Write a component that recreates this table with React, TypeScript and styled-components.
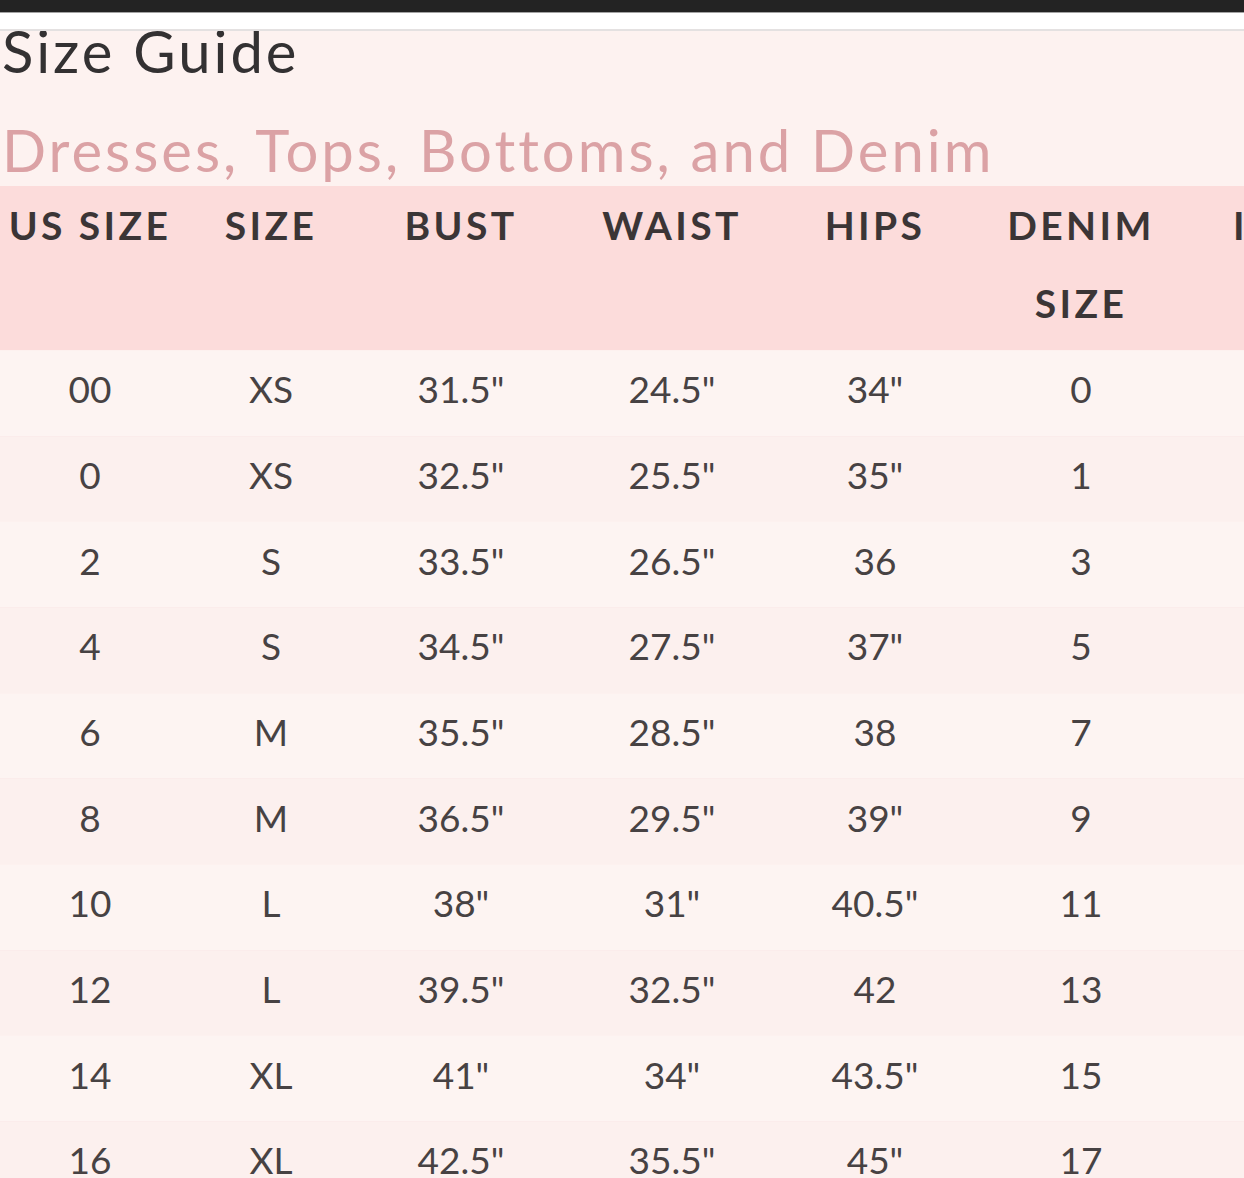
import React from "react";
import styled, { createGlobalStyle } from "styled-components";

const GlobalStyle = createGlobalStyle`
  html, body {
    margin: 0;
    padding: 0;
    background: #fdf2f0;
    overflow: hidden;
  }
  body {
    font-family: Lato, "Open Sans", "Liberation Sans", sans-serif;
  }
`;

const Screen = styled.div`
  width: 1244px;
  height: 1178px;
  overflow: hidden;
  background: #fdf2f0;
  display: flex;
  flex-direction: column;
`;

const TopBar = styled.div`
  flex: none;
  height: 12px;
  background: #232323;
  border-bottom: 1px solid #a3a3a3;
`;

const WhiteStrip = styled.div`
  flex: none;
  height: 16px;
  background: #ffffff;
  border-bottom: 2px solid #e4e1e1;
`;

const TitleClip = styled.div`
  flex: none;
  height: 54px;
  overflow: hidden;
`;

const Title = styled.h1`
  margin: -15px 0 0 2px;
  font-family: Lato, "Open Sans", sans-serif;
  font-weight: 400;
  font-size: 58px;
  line-height: 70px;
  color: #333132;
  letter-spacing: 3px;
  white-space: nowrap;
`;

const Subtitle = styled.h2`
  flex: none;
  margin: 0;
  padding: 36px 0 0 2px;
  height: 101px;
  box-sizing: border-box;
  font-family: Lato, "Open Sans", sans-serif;
  font-weight: 400;
  font-size: 58px;
  line-height: 58px;
  letter-spacing: 3px;
  color: #dba2a5;
  white-space: nowrap;
`;

const Table = styled.div`
  display: grid;
  grid-template-columns: 180px 182px 198px 224px 182px 230px 244px;
  width: max-content;
`;

const HeaderCell = styled.div`
  background: #fcdcdb;
  height: 164px;
  box-sizing: border-box;
  display: flex;
  flex-direction: column;
  align-items: center;
`;

const HeadLine = styled.span`
  font-family: Lato, "Open Sans", sans-serif;
  font-weight: 700;
  font-size: 39px;
  line-height: 78px;
  letter-spacing: 3.4px;
  color: #3b3536;
  white-space: nowrap;
`;

const Cell = styled.div<{ $alt: boolean }>`
  height: 85.67px;
  box-sizing: border-box;
  padding-bottom: 9px;
  display: flex;
  align-items: center;
  justify-content: center;
  background: ${(p) => (p.$alt ? "#fcf0ee" : "#fdf4f2")};
  border-top: 1px solid ${(p) => (p.$alt ? "#fbeceb" : "#fdf1ef")};
  font-family: Lato, "Open Sans", sans-serif;
  font-weight: 400;
  font-size: 37px;
  line-height: 1;
  color: #474243;
  white-space: nowrap;
`;

const headers: string[][] = [
  ["US SIZE"],
  ["SIZE"],
  ["BUST"],
  ["WAIST"],
  ["HIPS"],
  ["DENIM", "SIZE"],
  ["INSEAM", "WAIST"],
];

const rows: string[][] = [
  ["00", "XS", '31.5"', '24.5"', '34"', "0", ""],
  ["0", "XS", '32.5"', '25.5"', '35"', "1", ""],
  ["2", "S", '33.5"', '26.5"', "36", "3", ""],
  ["4", "S", '34.5"', '27.5"', '37"', "5", ""],
  ["6", "M", '35.5"', '28.5"', "38", "7", ""],
  ["8", "M", '36.5"', '29.5"', '39"', "9", ""],
  ["10", "L", '38"', '31"', '40.5"', "11", ""],
  ["12", "L", '39.5"', '32.5"', "42", "13", ""],
  ["14", "XL", '41"', '34"', '43.5"', "15", ""],
  ["16", "XL", '42.5"', '35.5"', '45"', "17", ""],
];

export default function App() {
  return (
    <>
      <GlobalStyle />
      <Screen>
        <TopBar />
        <WhiteStrip />
        <TitleClip>
          <Title>Size Guide</Title>
        </TitleClip>
        <Subtitle>Dresses, Tops, Bottoms, and Denim</Subtitle>
        <Table>
          {headers.map((lines, i) => (
            <HeaderCell key={`h${i}`}>
              {lines.map((l) => (
                <HeadLine key={l}>{l}</HeadLine>
              ))}
            </HeaderCell>
          ))}
          {rows.map((r, ri) =>
            r.map((v, ci) => (
              <Cell key={`${ri}-${ci}`} $alt={ri % 2 === 1}>
                {v}
              </Cell>
            ))
          )}
        </Table>
      </Screen>
    </>
  );
}
